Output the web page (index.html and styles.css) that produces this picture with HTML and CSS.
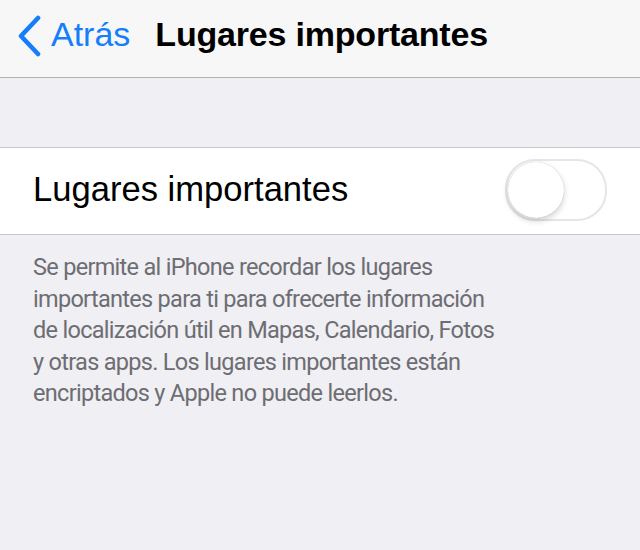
FILE: index.html
```html
<!DOCTYPE html>
<html lang="es">
<head>
<meta charset="utf-8">
<link rel="stylesheet" href="styles.css">
</head>
<body>
<div class="screen">
  <header class="nav">
    <a class="back">
      <svg class="chev" width="26" height="42" viewBox="0 0 26 42"><path d="M22 3 L5 21 L22 39" fill="none" stroke="#157efb" stroke-width="4.6" stroke-linecap="round" stroke-linejoin="round"/></svg>
      <span class="back-text">Atrás</span>
    </a>
    <h1 class="title">Lugares importantes</h1>
  </header>
  <div class="gap"></div>
  <div class="group">
    <div class="row">
      <span class="label">Lugares importantes</span>
      <span class="switch"><span class="knob"></span></span>
    </div>
  </div>
  <p class="footer">Se permite al iPhone recordar los lugares<br>importantes para ti para ofrecerte información<br>de localización útil en Mapas, Calendario, Fotos<br>y otras apps. Los lugares importantes están<br>encriptados y Apple no puede leerlos.</p>
</div>
</body>
</html>
```
FILE: styles.css
```css
html, body { margin: 0; padding: 0; }
body { background: #efeff4; font-family: "Liberation Sans", Arial, sans-serif; }
.screen { width: 640px; height: 550px; background: #efeff4; overflow: hidden; }
.nav {
  height: 77px; background: #f7f7f8; border-bottom: 1px solid #b2b2b2;
  display: flex; align-items: center;
}
.back { display: flex; align-items: center; margin-left: 16px; color: #157efb; }
.chev { display: block; margin-top: -6px; }
.back-text { font-size: 34px; margin-left: 9px; margin-top: -9px; }
.title { margin: -9px 0 0 25px; font-size: 34px; font-weight: 600; color: #000; letter-spacing: -0.2px; }
.gap { height: 69px; }
.group { background: #fff; border-top: 1px solid #c8c7cc; border-bottom: 1px solid #c8c7cc; }
.row { height: 86px; display: flex; align-items: center; justify-content: space-between; padding: 0 33px; }
.label { font-size: 34.6px; color: #000; margin-top: -4px; }
.switch {
  width: 98px; height: 58px; border-radius: 30px; border: 2px solid #e5e5ea; background: #fff;
  position: relative; margin-top: -2px;
}
.knob {
  position: absolute; left: 1px; top: 1px; width: 56px; height: 56px; border-radius: 50%;
  background: #fff; box-shadow: 0 3px 6px rgba(0,0,0,0.18), 0 0 1px rgba(0,0,0,0.25);
}
.footer {
  margin: 17px 0 0 33px; font-family: Roboto, "Liberation Sans", sans-serif;
  font-size: 23.5px; line-height: 31.6px; color: #6d6d72; letter-spacing: -0.7px;
}
```
